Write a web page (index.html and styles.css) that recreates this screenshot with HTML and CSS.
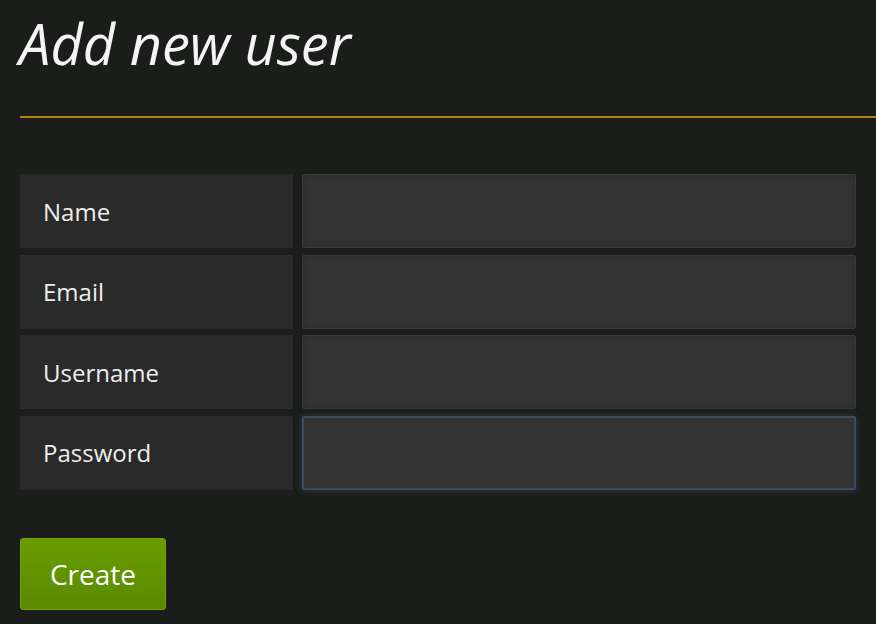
FILE: index.html
```html
<!DOCTYPE html>
<html lang="en">
<head>
  <meta charset="UTF-8" />
  <meta name="viewport" content="width=device-width, initial-scale=1.0"/>
  <title>Add new user</title>
  <link rel="stylesheet" href="styles.css">
</head>
<body>
  <div class="page">
    <h1 class="title">Add new user</h1>
    <form class="user-form">
      <div class="row">
        <label class="label" for="name">Name</label>
        <input class="field" id="name" type="text">
      </div>
      <div class="row">
        <label class="label" for="email">Email</label>
        <input class="field" id="email" type="email">
      </div>
      <div class="row">
        <label class="label" for="username">Username</label>
        <input class="field" id="username" type="text">
      </div>
      <div class="row">
        <label class="label" for="password">Password</label>
        <input class="field focused" id="password" type="password">
      </div>
      <button class="create-btn" type="button">Create</button>
    </form>
  </div>
</body>
</html>
```

FILE: styles.css
```css
body {
  background-color: #1a1d1a;
  font-family: 'Open Sans', 'DejaVu Sans', sans-serif;
  margin: 0;
  padding: 0;
  color: #fff;
  overflow: hidden;
}
.page {
  padding: 0 0 0 20px;
}
.title {
  margin: 0;
  padding: 5px 0 35px 0;
  font-size: 56px;
  font-weight: 400;
  font-style: italic;
  line-height: 76px;
  text-indent: -1px;
  color: #f4f4f4;
  border-bottom: 2px solid #b8820e;
}
.user-form {
  margin-top: 56px;
  width: 836px;
  display: flex;
  flex-direction: column;
  align-items: flex-start;
  gap: 6.67px;
}
.row {
  display: flex;
  gap: 9px;
  height: 74px;
  width: 100%;
}
.label {
  width: 273px;
  background-color: #2a2a2a;
  display: flex;
  align-items: center;
  padding-left: 23px;
  box-sizing: border-box;
  font-size: 24px;
  color: #eee;
}
.field {
  flex: 1;
  background-color: #333;
  border: 1px solid #383838;
  border-radius: 2px;
  box-shadow: inset 0 1px 8px rgba(0,0,0,0.15);
  outline: none;
  margin: 0;
  color: #eee;
}
.field.focused {
  border: 2px solid #3b4c62;
  box-shadow: 0 0 7px rgba(60,80,110,0.6);
}
.create-btn {
  margin-top: 41px;
  width: 146px;
  height: 72px;
  background: linear-gradient(#6a9c00, #598a00);
  border: 1px solid #72a20c;
  border-radius: 3px;
  color: #fff;
  font-family: 'Open Sans', 'DejaVu Sans', sans-serif;
  font-size: 28px;
  cursor: pointer;
}
```
